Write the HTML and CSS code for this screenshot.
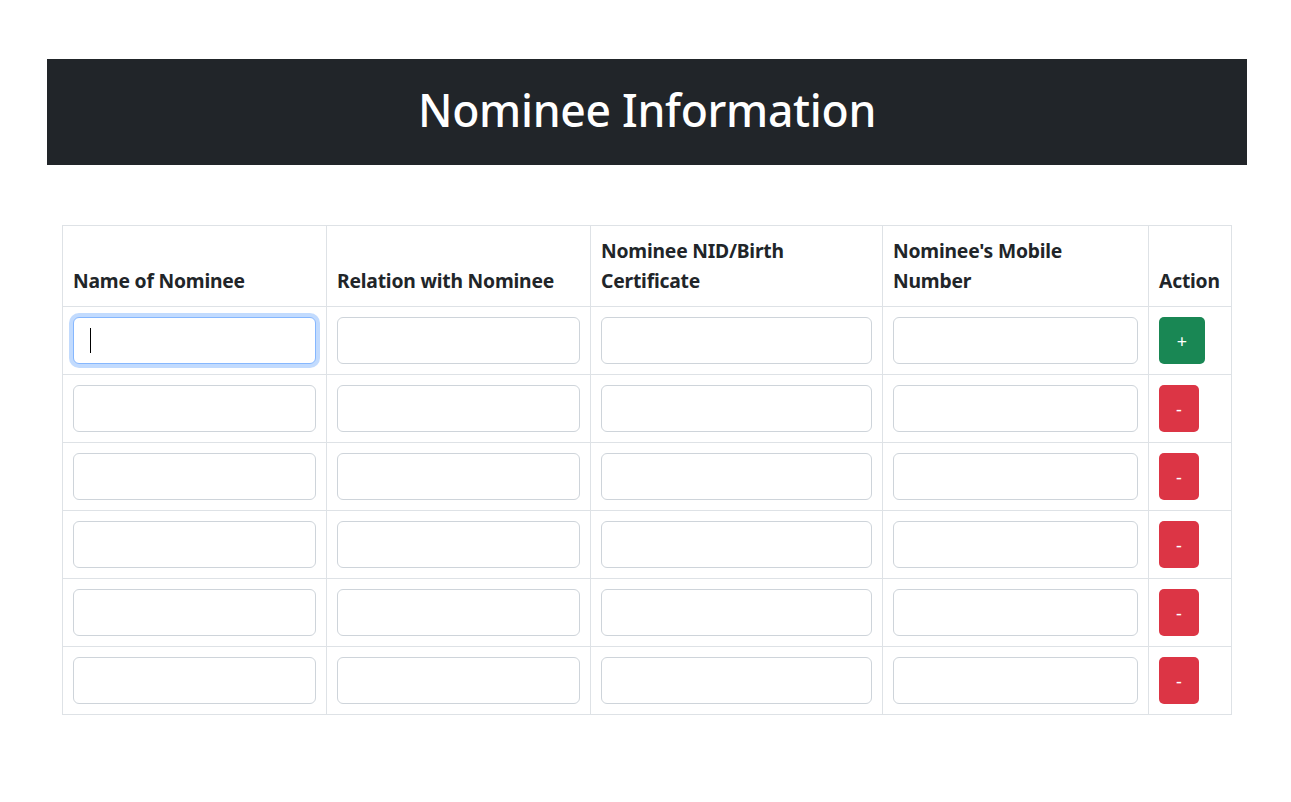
FILE: index.html
```html
<!DOCTYPE html>
<html lang="en">
<head>
<meta charset="utf-8">
<title>Nominee Information</title>
<link rel="stylesheet" href="styles.css">
</head>
<body>
<div class="page">
  <header class="banner"><h1>Nominee Information</h1></header>
  <div class="table-wrap">
    <table class="nominee-table">
      <colgroup>
        <col class="c1"><col class="c2"><col class="c3"><col class="c4"><col class="c5">
      </colgroup>
      <thead>
        <tr>
          <th>Name of Nominee</th>
          <th>Relation with Nominee</th>
          <th>Nominee NID/Birth Certificate</th>
          <th>Nominee's Mobile Number</th>
          <th>Action</th>
        </tr>
      </thead>
      <tbody>
        <tr>
          <td><div class="field"><input class="input focused" type="text"><span class="caret"></span></div></td>
          <td><input class="input" type="text"></td>
          <td><input class="input" type="text"></td>
          <td><input class="input" type="text"></td>
          <td><button class="btn add">+</button></td>
        </tr>
        <tr>
          <td><input class="input" type="text"></td>
          <td><input class="input" type="text"></td>
          <td><input class="input" type="text"></td>
          <td><input class="input" type="text"></td>
          <td><button class="btn remove">-</button></td>
        </tr>
        <tr>
          <td><input class="input" type="text"></td>
          <td><input class="input" type="text"></td>
          <td><input class="input" type="text"></td>
          <td><input class="input" type="text"></td>
          <td><button class="btn remove">-</button></td>
        </tr>
        <tr>
          <td><input class="input" type="text"></td>
          <td><input class="input" type="text"></td>
          <td><input class="input" type="text"></td>
          <td><input class="input" type="text"></td>
          <td><button class="btn remove">-</button></td>
        </tr>
        <tr>
          <td><input class="input" type="text"></td>
          <td><input class="input" type="text"></td>
          <td><input class="input" type="text"></td>
          <td><input class="input" type="text"></td>
          <td><button class="btn remove">-</button></td>
        </tr>
        <tr>
          <td><input class="input" type="text"></td>
          <td><input class="input" type="text"></td>
          <td><input class="input" type="text"></td>
          <td><input class="input" type="text"></td>
          <td><button class="btn remove">-</button></td>
        </tr>
      </tbody>
    </table>
  </div>
</div>
</body>
</html>
```

FILE: styles.css
```css
* { box-sizing: border-box; }
html, body { margin: 0; padding: 0; background: #fff; }
body {
  font-family: "Noto Sans", "Open Sans", sans-serif;
  color: #212529;
}
.page {
  width: 1200px;
  margin-left: 47px;
  padding-top: 59px;
}
.banner {
  background: #212529;
  height: 106px;
  display: flex;
  align-items: center;
  justify-content: center;
  padding-bottom: 5px;
}
.banner h1 {
  margin: 0;
  color: #fff;
  font-size: 44.5px;
  font-weight: 500;
  line-height: 1.2;
  letter-spacing: -0.3px;
}
.table-wrap {
  margin-top: 60px;
  padding-left: 15px;
  padding-right: 16px;
}
.nominee-table {
  width: 1169px;
  border-collapse: collapse;
  table-layout: fixed;
}
.c1 { width: 264px; }
.c2 { width: 264px; }
.c3 { width: 292px; }
.c4 { width: 266px; }
.c5 { width: 83px; }
.nominee-table th,
.nominee-table td {
  border: 1px solid #dee2e6;
  padding: 10px;
}
.nominee-table th {
  font-size: 19.3px;
  font-weight: 700;
  line-height: 30px;
  text-align: left;
  vertical-align: bottom;
  letter-spacing: -0.2px;
}
.nominee-table td {
  height: 68px;
  vertical-align: top;
}
.field { position: relative; }
.input {
  display: block;
  width: 100%;
  height: 47px;
  border: 1px solid #ced4da;
  border-radius: 6px;
  background: #fff;
  padding: 8px 16px;
  font: inherit;
  font-size: 20px;
  outline: none;
}
.input.focused {
  border-color: #86b7fe;
  box-shadow: 0 0 0 4px rgba(13, 110, 253, 0.25);
}
.caret {
  position: absolute;
  left: 17px;
  top: 11px;
  width: 1px;
  height: 25px;
  background: #000;
}
.btn {
  display: block;
  height: 47px;
  border: none;
  border-radius: 5px;
  color: #fff;
  font-family: "Noto Sans", sans-serif;
  font-size: 18px;
  line-height: 1;
  padding: 0;
  cursor: pointer;
}
.btn.add { width: 46px; background: #198754; }
.btn.remove { width: 40px; background: #dc3545; }
```
